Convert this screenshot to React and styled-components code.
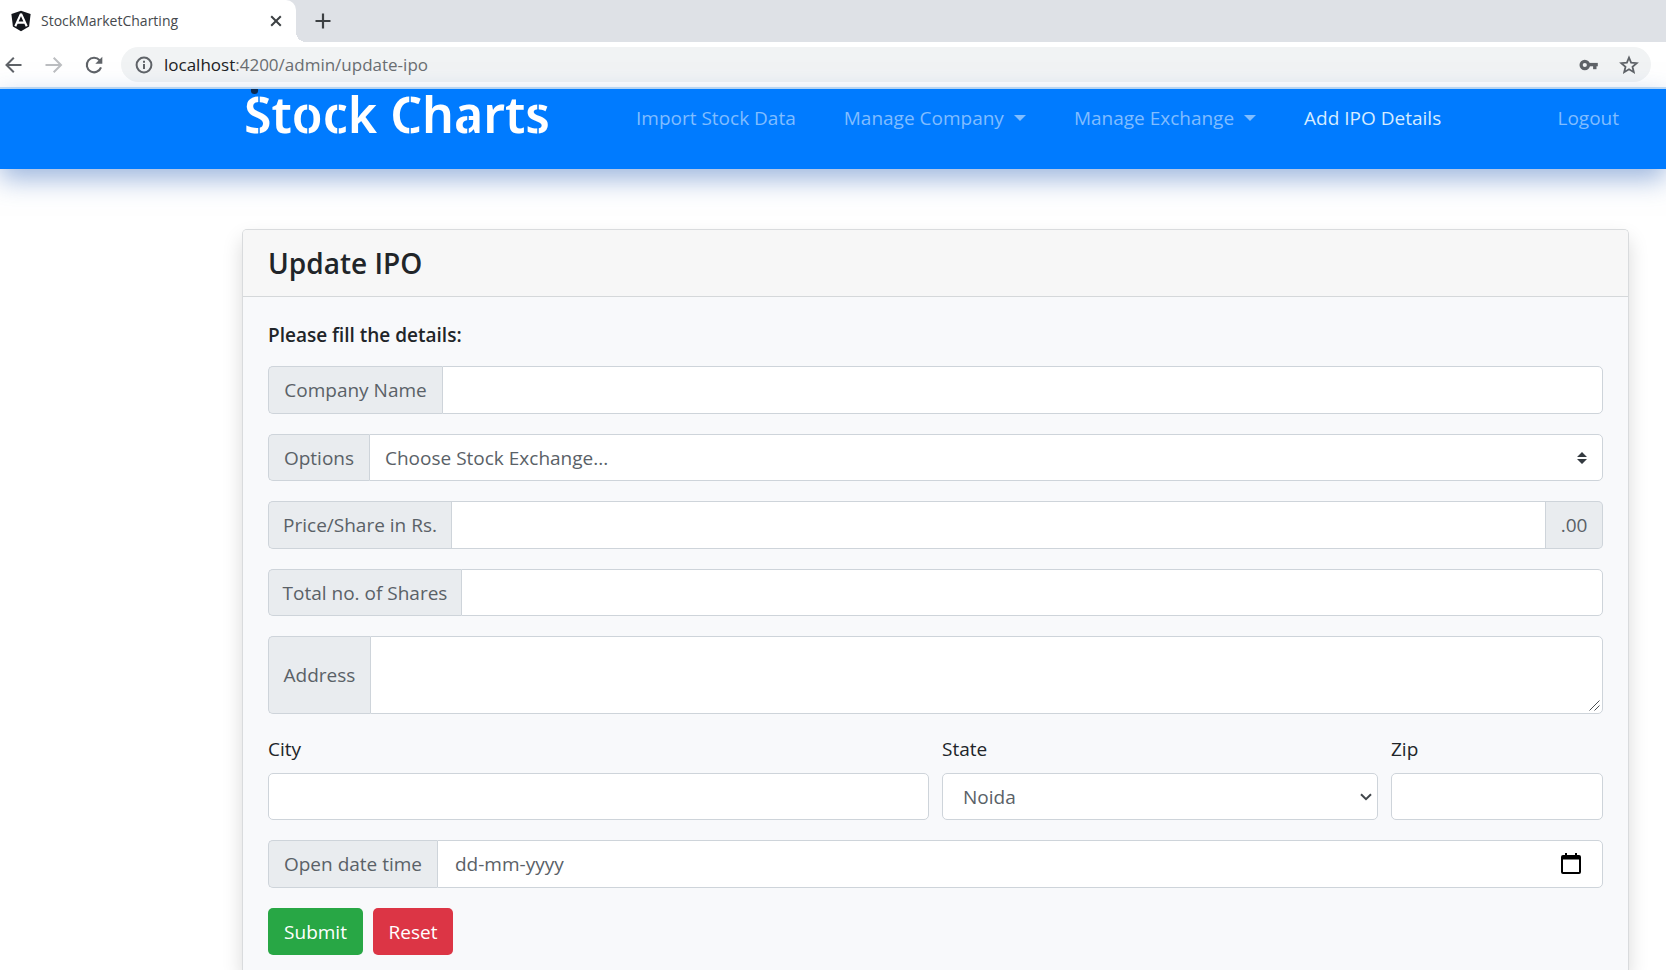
import React from "react";
import styled, { createGlobalStyle, css } from "styled-components";

const GlobalStyle = createGlobalStyle`
  *, *::before, *::after { box-sizing: border-box; }
  body {
    margin: 0;
    background: #fff;
    color: #212529;
    font-family: "Open Sans", "Noto Sans", sans-serif;
    font-size: 19px;
    line-height: 30px;
  }
  input, select, textarea, button { font: inherit; color: inherit; margin: 0; }
`;

const Screen = styled.div`
  min-height: 100vh;
  display: flex;
  flex-direction: column;
`;

/* ---------- browser frame ---------- */

const TabStrip = styled.div`
  display: flex;
  height: 42px;
  background: #dee1e6;
`;

const Tab = styled.div`
  position: relative;
  display: flex;
  align-items: center;
  width: 296px;
  padding: 0 14px 0 10px;
  background: #fff;
  border-radius: 0 10px 0 0;
  color: #45494d;
  font-size: 14px;
  line-height: 20px;

  &::after {
    content: "";
    position: absolute;
    left: 100%;
    bottom: 0;
    width: 10px;
    height: 10px;
    background: radial-gradient(circle at 100% 0, #dee1e6 10px, #fff 10px);
  }
`;

const TabTitle = styled.span`
  flex: 1;
  padding-left: 9px;
`;

const IconButton = styled.button`
  display: grid;
  place-items: center;
  padding: 0;
  border: 0;
  background: none;
  color: ${(p) => p.$color || "#5f6368"};
  svg { display: block; }
`;

const NewTab = styled(IconButton)`
  width: 20px;
  margin-left: 17px;
`;

const Toolbar = styled.div`
  display: flex;
  align-items: center;
  height: 47px;
  padding: 0 15px 0 4px;
  border-bottom: 2px solid #c3dff8;
  background: #fff;
`;

const HistoryButtons = styled.div`
  display: flex;
  gap: 20px;
  margin-right: 17px;
`;

const AddressBar = styled.div`
  flex: 1;
  display: flex;
  align-items: center;
  height: 35px;
  padding: 0 12px 0 14px;
  border-radius: 18px;
  background: #f1f3f4;
`;

const Url = styled.span`
  flex: 1;
  padding-left: 11px;
  color: #6a6e72;
  font-size: 17px;
  line-height: 24px;
  b { font-weight: 400; color: #202124; }
`;

const AddressTools = styled.div`
  display: flex;
  gap: 20px;
`;

/* ---------- site navigation ---------- */

const NavBar = styled.nav`
  position: relative;
  display: flex;
  align-items: flex-start;
  height: 80px;
  padding: 0 47px 0 244px;
  background: #007bff;
  box-shadow: 0 10px 25px rgba(60, 110, 190, 0.5);
`;

const Brand = styled.a`
  position: relative;
  width: 306px;
  color: #fff;
  font-family: "Noto Sans", sans-serif;
  font-size: 50px;
  font-weight: 600;
  line-height: 50px;
  text-decoration: none;
  white-space: nowrap;

  svg {
    position: absolute;
    left: 0;
    top: 0;
  }
`;

const NavLinks = styled.div`
  display: flex;
  flex: 1;
  gap: 48px;
  margin-left: 86px;
  padding-top: 14px;
`;

const NavLink = styled.a`
  display: flex;
  align-items: center;
  gap: 10px;
  color: ${(p) => (p.$active ? "#d6ecff" : "#80bdff")};
  text-decoration: none;
  white-space: nowrap;
  ${(p) => p.$end && css`margin-left: auto;`}
`;

const Caret = styled.span`
  border: 6px solid transparent;
  border-top-color: currentColor;
  border-bottom: 0;
`;

/* ---------- form card ---------- */

const Page = styled.main`
  flex: 1;
  display: flex;
  flex-direction: column;
  padding: 60px 37px 0 242px;
`;

const Card = styled.section`
  flex: 1;
  border: 1px solid #d9dbdd;
  border-bottom: 0;
  border-radius: 5px 5px 0 0;
  background: #f8f9fb;
  box-shadow: 0 10px 20px rgba(0, 0, 0, 0.15);
`;

const CardHeader = styled.header`
  padding: 15px 25px;
  border-bottom: 1px solid #d5d8da;
  border-radius: 4px 4px 0 0;
  background: #f7f7f7;
`;

const Title = styled.h1`
  margin: 0;
  font-size: 28px;
  font-weight: 600;
  line-height: 36px;
`;

const Form = styled.form`
  padding: 24px 25px 14px;
`;

const Hint = styled.p`
  margin: 0 0 16px;
  font-weight: 600;
  line-height: 29px;
`;

const control = css`
  width: 100%;
  height: 47px;
  padding: 0 15px;
  border: 1px solid #ced4da;
  border-radius: 5px;
  background: #fff;
  color: #5a6167;
  outline: 0;
`;

const Input = styled.input`
  ${control}
  &::placeholder { color: #5a6167; opacity: 1; }
`;

const DateInput = styled(Input)`
  padding-left: 17px;
`;

const Select = styled.select`
  ${control}
  appearance: none;
`;

const TextArea = styled.textarea`
  ${control}
  display: block;
  resize: vertical;
  &::-webkit-resizer { background: transparent; }
`;

const ControlBox = styled.div`
  position: relative;
  display: flex;
  flex: 1;
`;

const groupHeights = { compact: 47, regular: 48, tall: 78 };

const Group = styled.div`
  display: flex;
  height: ${(p) => groupHeights[p.$size || "regular"]}px;
  margin-bottom: 20px;

  ${Input}, ${Select}, ${TextArea} {
    height: 100%;
    border-radius: ${(p) => (p.$suffix ? "0" : "0 5px 5px 0")};
  }
`;

const Addon = styled.label`
  display: flex;
  align-items: center;
  justify-content: center;
  width: ${(p) => p.$width}px;
  border: 1px solid #ced4da;
  border-width: ${(p) => (p.$end ? "1px 1px 1px 0" : "1px 0 1px 1px")};
  border-radius: ${(p) => (p.$end ? "0 5px 5px 0" : "5px 0 0 5px")};
  background: #e9ecef;
  color: #5a6167;
  white-space: nowrap;
`;

const Overlay = styled.span`
  position: absolute;
  right: ${(p) => p.$right}px;
  top: 0;
  bottom: ${(p) => (p.$low ? "3px" : "0")};
  display: flex;
  align-items: ${(p) => (p.$low ? "flex-end" : "center")};
  pointer-events: none;
  svg { display: block; }
`;

const Columns = styled.div`
  display: grid;
  grid-template-columns: 661fr 436fr 212fr;
  gap: 13px;
  margin-bottom: 20px;
`;

const Field = styled.div`
  label { display: block; margin-bottom: 9px; }
`;

const StateSelect = styled(Select)`
  padding-left: 20px;
`;

const Actions = styled.div`
  display: flex;
  gap: 10px;
`;

const Button = styled.button`
  width: ${(p) => p.$width}px;
  height: 47px;
  padding: 0;
  border: 0;
  border-radius: 5px;
  background: ${(p) => p.$color};
  color: #fff;
`;

/* ---------- drawings ---------- */

const StencilCuts = () => (
  <svg width="306" height="50" viewBox="0 0 306 50" aria-hidden="true">
    <circle cx="10.5" cy="1.5" r="3.6" fill="#0a2a52" />
    <path
      d="M15 5 V15 M15 34 V46 M64 12 V23 M64 34 V46 M94 12 V23 M94 34 V46 M166 5 V15 M166 34 V46 M224 26 V46 M294 12 V21 M294 36 V46"
      stroke="#007bff"
      strokeWidth="2"
      opacity="0.75"
    />
  </svg>
);

const AngularLogo = () => (
  <svg width="22" height="22" viewBox="0 0 22 22" aria-hidden="true">
    <path d="M11 0.8 L20.6 4.1 L19.1 16.6 L11 21.2 L2.9 16.6 L1.4 4.1 Z" fill="#13161c" />
    <path d="M11 3.6 L5.3 16.2 M11 3.6 L16.7 16.2 M7.6 12.6 H14.4" stroke="#fff" strokeWidth="2.1" fill="none" />
  </svg>
);

const CloseIcon = () => (
  <svg width="12" height="12" viewBox="0 0 12 12" stroke="currentColor" strokeWidth="2">
    <path d="M1.2 1.2 L10.8 10.8 M10.8 1.2 L1.2 10.8" />
  </svg>
);

const PlusIcon = () => (
  <svg width="16" height="16" viewBox="0 0 16 16" stroke="currentColor" strokeWidth="2.2">
    <path d="M8 0.5 V15.5 M0.5 8 H15.5" />
  </svg>
);

const ArrowIcon = ({ flip }) => (
  <svg width="20" height="20" viewBox="0 0 20 20" fill="none" stroke="currentColor" strokeWidth="2">
    <path d={flip ? "M1.5 10 H17 M9.7 2.8 L17 10 L9.7 17.2" : "M17.5 10 H2.5 M9.8 2.8 L2.5 10 L9.8 17.2"} />
  </svg>
);

const ReloadIcon = () => (
  <svg width="20" height="20" viewBox="0 0 20 20">
    <path d="M15.6 5.2 A7.3 7.3 0 1 0 17 12.4" fill="none" stroke="currentColor" strokeWidth="2.1" />
    <path d="M18.3 1.8 V8.8 H11.3 Z" fill="currentColor" />
  </svg>
);

const InfoIcon = () => (
  <svg width="18" height="18" viewBox="0 0 18 18" fill="none" stroke="#5f6368" strokeWidth="2">
    <circle cx="9" cy="9" r="7.4" />
    <path d="M9 8 V13 M9 4.8 V6.8" />
  </svg>
);

const KeyIcon = () => (
  <svg width="20" height="20" viewBox="0 0 20 20" fill="none" stroke="currentColor">
    <circle cx="5.8" cy="10" r="3.7" strokeWidth="3.2" />
    <path d="M9.5 9.6 H18.8" strokeWidth="3.4" />
    <path d="M15.8 10 V14.2" strokeWidth="3.4" />
  </svg>
);

const StarIcon = () => (
  <svg width="20" height="20" viewBox="0 0 20 20" fill="none" stroke="currentColor" strokeWidth="1.8">
    <path d="M10 2.6 L12.1 7.7 L17.7 8.2 L13.5 11.8 L14.8 17.2 L10 14.3 L5.2 17.2 L6.5 11.8 L2.3 8.2 L7.9 7.7 Z" />
  </svg>
);

const SortIcon = () => (
  <svg width="10" height="12" viewBox="0 0 10 12" fill="#343a40">
    <path d="M0 5 L5 0 L10 5 Z M0 7 H10 L5 12 Z" />
  </svg>
);

const ChevronIcon = () => (
  <svg width="12" height="8" viewBox="0 0 12 8" fill="none" stroke="#41464b" strokeWidth="2">
    <path d="M1 1.2 L6 6.2 L11 1.2" />
  </svg>
);

const GripIcon = () => (
  <svg width="11" height="11" viewBox="0 0 11 11" fill="none" stroke="#4a4e52">
    <path d="M0.5 10.5 L10.5 0.5 M5.5 10.5 L10.5 5.5" />
  </svg>
);

const CalendarIcon = () => (
  <svg width="20" height="22" viewBox="0 0 20 22" fill="#000">
    <path d="M4 0 H6 V2 H14 V0 H16 V2 H18 Q20 2 20 4 V19 Q20 21 18 21 H2 Q0 21 0 19 V4 Q0 2 2 2 H4 Z M2 6.5 V19 H18 V6.5 Z" fillRule="evenodd" />
  </svg>
);

export default function App() {
  return (
    <Screen>
      <GlobalStyle />
      <TabStrip>
        <Tab>
          <AngularLogo />
          <TabTitle>StockMarketCharting</TabTitle>
          <IconButton aria-label="Close tab" $color="#3c4043"><CloseIcon /></IconButton>
        </Tab>
        <NewTab aria-label="New tab" $color="#3c4043"><PlusIcon /></NewTab>
      </TabStrip>
      <Toolbar>
        <HistoryButtons>
          <IconButton aria-label="Back"><ArrowIcon /></IconButton>
          <IconButton aria-label="Forward" $color="#bcbec1"><ArrowIcon flip /></IconButton>
          <IconButton aria-label="Reload"><ReloadIcon /></IconButton>
        </HistoryButtons>
        <AddressBar>
          <InfoIcon />
          <Url><b>localhost</b>:4200/admin/update-ipo</Url>
          <AddressTools>
            <IconButton aria-label="Passwords"><KeyIcon /></IconButton>
            <IconButton aria-label="Bookmark"><StarIcon /></IconButton>
          </AddressTools>
        </AddressBar>
      </Toolbar>

      <NavBar>
        <Brand href="#">Stock Charts<StencilCuts /></Brand>
        <NavLinks>
          <NavLink href="#">Import Stock Data</NavLink>
          <NavLink href="#">Manage Company<Caret /></NavLink>
          <NavLink href="#">Manage Exchange<Caret /></NavLink>
          <NavLink href="#" $active>Add IPO Details</NavLink>
          <NavLink href="#" $end>Logout</NavLink>
        </NavLinks>
      </NavBar>

      <Page>
        <Card>
          <CardHeader><Title>Update IPO</Title></CardHeader>
          <Form onSubmit={(e) => e.preventDefault()}>
            <Hint>Please fill the details:</Hint>
            <Group>
              <Addon htmlFor="company" $width={174}>Company Name</Addon>
              <ControlBox><Input id="company" /></ControlBox>
            </Group>
            <Group $size="compact">
              <Addon htmlFor="exchange" $width={101}>Options</Addon>
              <ControlBox>
                <Select id="exchange"><option>Choose Stock Exchange...</option></Select>
                <Overlay $right={16}><SortIcon /></Overlay>
              </ControlBox>
            </Group>
            <Group $suffix>
              <Addon htmlFor="price" $width={183}>Price/Share in Rs.</Addon>
              <ControlBox><Input id="price" /></ControlBox>
              <Addon as="span" $end $width={57}>.00</Addon>
            </Group>
            <Group $size="compact">
              <Addon htmlFor="shares" $width={193}>Total no. of Shares</Addon>
              <ControlBox><Input id="shares" /></ControlBox>
            </Group>
            <Group $size="tall">
              <Addon htmlFor="address" $width={102}>Address</Addon>
              <ControlBox>
                <TextArea id="address" />
                <Overlay $right={3} $low><GripIcon /></Overlay>
              </ControlBox>
            </Group>
            <Columns>
              <Field>
                <label htmlFor="city">City</label>
                <Input id="city" />
              </Field>
              <Field>
                <label htmlFor="state">State</label>
                <ControlBox>
                  <StateSelect id="state"><option>Noida</option></StateSelect>
                  <Overlay $right={6}><ChevronIcon /></Overlay>
                </ControlBox>
              </Field>
              <Field>
                <label htmlFor="zip">Zip</label>
                <Input id="zip" />
              </Field>
            </Columns>
            <Group>
              <Addon htmlFor="open" $width={169}>Open date time</Addon>
              <ControlBox>
                <DateInput id="open" placeholder="dd-mm-yyyy" />
                <Overlay $right={22}><CalendarIcon /></Overlay>
              </ControlBox>
            </Group>
            <Actions>
              <Button type="submit" $color="#28a745" $width={95}>Submit</Button>
              <Button type="reset" $color="#dc3545" $width={80}>Reset</Button>
            </Actions>
          </Form>
        </Card>
      </Page>
    </Screen>
  );
}
